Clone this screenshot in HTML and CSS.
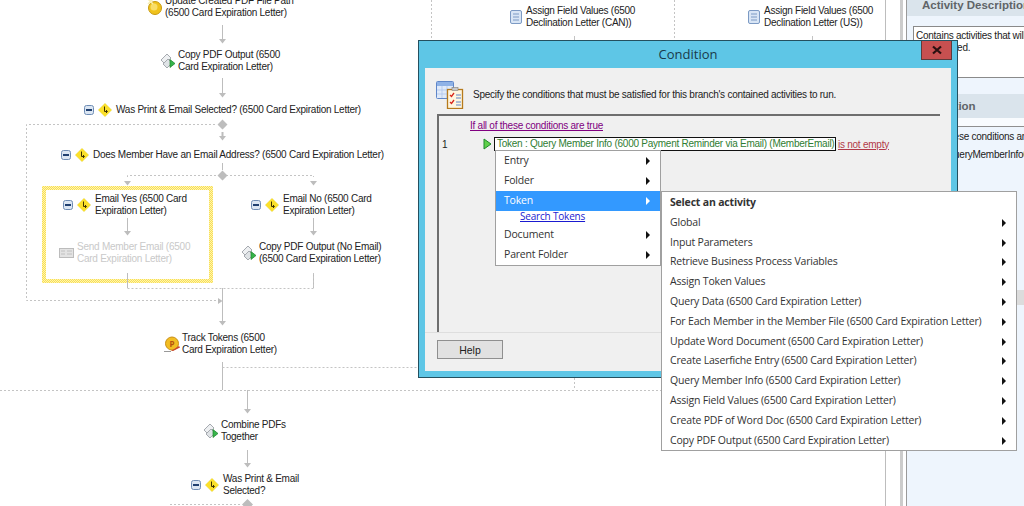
FILE: index.html
```html
<!DOCTYPE html>
<html lang="en">
<head>
<meta charset="utf-8">
<title>Condition</title>
<link rel="stylesheet" href="styles.css">
</head>
<body>
<svg class="defs" width="0" height="0" aria-hidden="true">
  <defs>
    <symbol id="i-collapse" viewBox="0 0 10 10">
      <rect x=".5" y=".5" width="9" height="9" rx="2" fill="#dbe6f3" stroke="#6f8db5"/>
      <rect x="2" y="4" width="6" height="2" fill="#1f3f70"/>
    </symbol>
    <symbol id="i-branch" viewBox="0 0 14 14">
      <path d="M7 0 14 7 7 14 0 7Z" fill="#fbe02c" stroke="#efeab8" stroke-width=".6"/>
      <path d="M6.500 3.500V8.500H9M8 7l1.500 1.500L8 10" fill="none" stroke="#3f3300" stroke-width="1"/>
    </symbol>
    <symbol id="i-coin" viewBox="0 0 18 18">
      <circle cx="9" cy="10" r="6.500" fill="#f0c21c" stroke="#c79a10"/>
      <circle cx="8" cy="9" r="3.500" fill="#f9de68"/>
      <path d="M2 1 7 6M7 1 2 6" stroke="#f7eeb0" stroke-width="1.500"/>
    </symbol>
    <symbol id="i-copy" viewBox="0 0 18 18">
      <path d="M2 8 8 2l4 4-6 6Z" fill="#eef0f2" stroke="#a6aab0"/>
      <path d="M4 12 9 7l4 4-5 5Z" fill="#dfe3e6" stroke="#a6aab0"/>
      <path d="M11 7.500 16 11.500 11 15.500Z" fill="#36b54a" stroke="#1c7f2c" stroke-width=".7"/>
    </symbol>
    <symbol id="i-doc" viewBox="0 0 18 18">
      <rect x="3.500" y="2.500" width="11" height="13" rx="1.500" fill="#d8e5f5" stroke="#7c9ac4"/>
      <path d="M6 6h6M6 9h6M6 12h6" stroke="#7c9ac4"/>
    </symbol>
    <symbol id="i-mail" viewBox="0 0 18 18">
      <rect x="1.500" y="4.500" width="14" height="9" fill="#e3e3e3" stroke="#bcbcbc"/>
      <path d="M3 7h4M3 10h4M9 7h5M9 10h5" stroke="#c0c0c0"/>
    </symbol>
    <symbol id="i-token" viewBox="0 0 18 18">
      <circle cx="9" cy="8.500" r="6.500" fill="#f2bd22" stroke="#c98f14"/>
      <text x="9" y="11.500" class="coin-letter">P</text>
      <path d="M8 16 16 11l1 1.500L10 16Z" fill="#c8452c"/>
      <path d="M1 16.500h7" stroke="#999"/>
    </symbol>
    <symbol id="i-check" viewBox="0 0 28 28">
      <rect x=".5" y=".5" width="17" height="17" rx="1" fill="#dfeafa" stroke="#5f86c9"/>
      <rect x="1" y="1" width="16" height="4" fill="#8fb2e6"/>
      <path d="M1 9h16M1 13h16M6 5v12M11 5v12" stroke="#a9c2ea" stroke-width=".7"/>
      <rect x="11.500" y="8.500" width="15" height="19" fill="#fff6df" stroke="#b67a1c" stroke-width="1.300"/>
      <rect x="16" y="6.500" width="6" height="3" fill="#c9c9c9" stroke="#808080" stroke-width=".6"/>
      <path d="M14 14l1.500 1.500L18 12M14 21l1.500 1.500L18 19" fill="none" stroke="#d8261c" stroke-width="1.300"/>
      <path d="M20 14h5M20 17h5M20 21h5M20 24h5" stroke="#5f86c9"/>
    </symbol>
  </defs>
</svg>

<div class="app">
  <main class="canvas">
    <div class="selection"></div>

    <svg class="wires" width="906" height="506" viewBox="0 0 906 506" aria-hidden="true">
      <g class="solid">
        <path d="M222.500 25V39M222.500 78V93M222.500 163V170M127.500 218V231M313.500 218V231M127.500 273V288M313.500 273V288M222.500 288V321M222.500 362V390M247.500 390V409M247.500 450V463M885.500 0V506"/>
      </g>
      <g class="dash">
        <path d="M215 124.500H26.500V300.500H218"/>
        <path d="M127.500 177V175.500H313.500V177M127.500 288.500H313.500V273"/>
        <path d="M222.500 367.500H418M0 390.500H906M170 504.500H240"/>
        <path d="M431.500 0V40M674.500 0V40M574.500 378V390"/>
      </g>
      <g class="solid-light">
        <path d="M574.500 36V40M812.500 36V40"/>
      </g>
      <g class="heads">
        <path d="M219 136h7l-3.500 4.500ZM219 39h7l-3.500 4.500ZM219 93h7l-3.500 4.500ZM124 181h7l-3.500 4.500ZM310 181h7l-3.500 4.500ZM124 231h7l-3.500 4.500ZM310 231h7l-3.500 4.500ZM219 321h7l-3.500 4.500ZM244 409h7l-3.500 4.500ZM244 463h7l-3.500 4.500Z"/>
        <path d="M218 298v6l4.500-3Z"/>
        <path d="M222.500 119.500l5 5-5 5-5-5ZM222.500 170.500l5 5-5 5-5-5ZM247.500 499l5.500 5.500-5.500 5.500-5.500-5.500Z"/>
        <rect x="221.500" y="132" width="2" height="4"/>
        <rect class="bar" x="900" y="0" width="3" height="506"/>
      </g>
    </svg>

    <div class="node n-update"><svg class="ico"><use href="#i-coin"/></svg><span>Update Created PDF File Path<br>(6500 Card Expiration Letter)</span></div>
    <div class="node n-copy"><svg class="ico"><use href="#i-copy"/></svg><span>Copy PDF Output (6500<br>Card Expiration Letter)</span></div>
    <div class="node branch n-was"><svg class="col"><use href="#i-collapse"/></svg><svg class="dia"><use href="#i-branch"/></svg><span>Was Print &amp; Email Selected? (6500 Card Expiration Letter)</span></div>
    <div class="node branch n-does"><svg class="col"><use href="#i-collapse"/></svg><svg class="dia"><use href="#i-branch"/></svg><span>Does Member Have an Email Address? (6500 Card Expiration Letter)</span></div>
    <div class="node branch n-yes"><svg class="col"><use href="#i-collapse"/></svg><svg class="dia"><use href="#i-branch"/></svg><span>Email Yes (6500 Card<br>Expiration Letter)</span></div>
    <div class="node branch n-no"><svg class="col"><use href="#i-collapse"/></svg><svg class="dia"><use href="#i-branch"/></svg><span>Email No (6500 Card<br>Expiration Letter)</span></div>
    <div class="node disabled n-send"><svg class="ico"><use href="#i-mail"/></svg><span>Send Member Email (6500<br>Card Expiration Letter)</span></div>
    <div class="node n-copyno"><svg class="ico"><use href="#i-copy"/></svg><span>Copy PDF Output (No Email)<br>(6500 Card Expiration Letter)</span></div>
    <div class="node n-track"><svg class="ico"><use href="#i-token"/></svg><span>Track Tokens (6500<br>Card Expiration Letter)</span></div>
    <div class="node n-combine"><svg class="ico"><use href="#i-copy"/></svg><span>Combine PDFs<br>Together</span></div>
    <div class="node branch n-was2"><svg class="col"><use href="#i-collapse"/></svg><svg class="dia"><use href="#i-branch"/></svg><span>Was Print &amp; Email<br>Selected?</span></div>
    <div class="node n-can"><svg class="ico"><use href="#i-doc"/></svg><span>Assign Field Values (6500<br>Declination Letter (CAN))</span></div>
    <div class="node n-us"><svg class="ico"><use href="#i-doc"/></svg><span>Assign Field Values (6500<br>Declination Letter (US))</span></div>
  </main>

  <aside class="side">
    <h2 class="side-head first">Activity Description</h2>
    <div class="side-box desc">Contains activities that will<br>be executed.</div>
    <h2 class="side-head">Condition</h2>
    <div class="side-gap"></div>
    <div class="side-box cond">
      <p>If all of these conditions are true</p>
      <p>Token: QueryMemberInfo6000</p>
    </div>
    <div class="side-band"></div>
  </aside>

  <section class="dialog">
    <header class="dlg-title">
      <span>Condition</span>
      <button class="close" type="button"><svg width="12" height="10" viewBox="0 0 12 10"><path d="M2 1.500 10 8.500M10 1.500 2 8.500" stroke="#2a1010" stroke-width="2.200"/></svg></button>
    </header>
    <div class="dlg-body">
      <div class="intro">
        <svg class="intro-ico"><use href="#i-check"/></svg>
        <span>Specify the conditions that must be satisfied for this branch's contained activities to run.</span>
      </div>
      <div class="cond-list">
        <a class="all-link">If all of these conditions are true</a>
        <div class="cond-row">
          <span class="row-num">1</span>
          <svg class="play" width="9" height="12" viewBox="0 0 9 12"><path d="M1 1 8 6 1 11Z" fill="#5fd04a" stroke="#1f8a2a"/></svg>
          <span class="cond-token">Token : Query Member Info (6000 Payment Reminder via Email) (MemberEmail)</span>
          <a class="cond-op">is not empty</a>
        </div>
      </div>
      <footer class="dlg-foot"><button class="help" type="button">Help</button></footer>
    </div>
  </section>

  <nav class="menu menu-a">
    <div class="mi">Entry</div>
    <div class="mi">Folder</div>
    <div class="mi on">Token</div>
    <a class="search">Search Tokens</a>
    <div class="mi">Document</div>
    <div class="mi">Parent Folder</div>
  </nav>

  <nav class="menu menu-b">
    <div class="mi head">Select an activity</div>
    <div class="mi">Global</div>
    <div class="mi">Input Parameters</div>
    <div class="mi">Retrieve Business Process Variables</div>
    <div class="mi">Assign Token Values</div>
    <div class="mi">Query Data (6500 Card Expiration Letter)</div>
    <div class="mi">For Each Member in the Member File (6500 Card Expiration Letter)</div>
    <div class="mi">Update Word Document (6500 Card Expiration Letter)</div>
    <div class="mi">Create Laserfiche Entry (6500 Card Expiration Letter)</div>
    <div class="mi">Query Member Info (6500 Card Expiration Letter)</div>
    <div class="mi">Assign Field Values (6500 Card Expiration Letter)</div>
    <div class="mi">Create PDF of Word Doc (6500 Card Expiration Letter)</div>
    <div class="mi">Copy PDF Output (6500 Card Expiration Letter)</div>
  </nav>
</div>
</body>
</html>
```
FILE: styles.css
```css
* { box-sizing: border-box; }
html, body { margin: 0; height: 100%; }
body { background: #fff; color: #222; font-family: "Liberation Sans", Arial, sans-serif; font-size: 10px; letter-spacing: -0.25px; overflow: hidden; }
.defs { position: absolute; }
.coin-letter { font: bold 8px "Open Sans", sans-serif; text-anchor: middle; fill: #b5500f; }

.app { position: relative; display: flex; width: 1024px; height: 506px; overflow: hidden; }

/* workflow canvas */
.canvas { position: relative; flex: 0 0 906px; height: 506px; background: #fff; }
.wires { position: absolute; left: 0; top: 0; overflow: visible; }
.wires path { fill: none; }
.solid path { stroke: #bdbdbd; }
.dash path { stroke: #c4c4c4; stroke-dasharray: 2 2; }
.solid-light path { stroke: #c4c4c4; }
.wires .heads path, .heads rect { fill: #bdbdbd; }
.wires .heads .bar { fill: #cccccc; }
.selection { position: absolute; left: 42px; top: 186px; width: 171px; height: 97px; padding: 4px; background: repeating-conic-gradient(#f8df55 0 25%, #fff4b0 0 50%) 0 0 / 2px 2px; }
.selection::before { content: ""; display: block; height: 100%; background: #fff; }

.node { position: absolute; display: flex; align-items: center; gap: 1px; white-space: nowrap; line-height: 12px; color: #222; }
.ico { width: 18px; height: 18px; flex: none; }
.branch { gap: 4px; }
.col { width: 10px; height: 10px; flex: none; }
.dia { width: 14px; height: 14px; flex: none; }
.disabled { color: #c9c9c9; }

.n-update { left: 146px; top: -5px; }
.n-copy { left: 159px; top: 49px; }
.n-was { left: 84px; top: 103px; }
.n-does { left: 61px; top: 148px; }
.n-yes { left: 63px; top: 193px; }
.n-no { left: 251px; top: 193px; }
.n-send { left: 58px; top: 241px; }
.n-copyno { left: 240px; top: 241px; }
.n-track { left: 163px; top: 332px; }
.n-combine { left: 202px; top: 419px; }
.n-was2 { left: 191px; top: 473px; }
.n-can { left: 507px; top: 5px; }
.n-us { left: 745px; top: 5px; }

/* right panel */
.side { flex: 1; min-width: 0; height: 506px; background: #eef5fd; border-left: 1px solid #9a9a9a; display: flex; flex-direction: column; overflow: hidden; }
.side-head { flex: none; margin: 0; height: 24px; background: #dae4ec; color: #5f6468; font-size: 11.500px; letter-spacing: 0; font-weight: 700; line-height: 24px; padding-left: 15px; white-space: nowrap; }
.side-head.first { height: 16px; line-height: 10px; }
.side-gap { flex: 0 0 9px; background: #f8fbfe; border-bottom: 1px solid #8f8f8f; height: 10px; }
.side-box { flex: none; margin-left: 6px; width: 130px; color: #222; line-height: 12px; white-space: nowrap; }
.desc { margin-top: 10px; height: 52px; background: #fff; border: 1px solid #8a8a8a; padding: 3px 2px; margin-bottom: 16px; }
.cond { height: 163px; padding: 4px 0 0 3px; }
.cond p { margin: 0 0 6px; }
.side-band { flex: 0 0 15px; background: #dcdcdc; }

/* dialog window */
.dialog { position: absolute; left: 418px; top: 40px; width: 540px; height: 338px; background: #5ec6e6; border: 1px solid #24505f; display: flex; flex-direction: column; }
.dlg-title { position: relative; flex: 0 0 27px; display: flex; align-items: center; justify-content: center; padding-bottom: 2px; font-family: "Open Sans", sans-serif; font-size: 13px; letter-spacing: 0; color: #1a3a4a; }
.close { position: absolute; right: 5px; top: 0; width: 31px; height: 19px; background: #c75050; border: 1px solid #5e3b3b; border-top: 0; padding: 0; display: flex; align-items: center; justify-content: center; }
.dlg-body { flex: 1; margin: 0 6px 6px; background: #f0f0f0; display: flex; flex-direction: column; }
.intro { flex: 0 0 46px; display: flex; align-items: center; gap: 9px; padding: 6px 0 0 11px; }
.intro-ico { width: 28px; height: 28px; flex: none; margin-top: 2px; }
.cond-list { flex: 0 0 218px; margin: 0 11px 0 12px; border-left: 2px solid #6e6e6e; border-top: 2px solid #6e6e6e; position: relative; }
.all-link { display: block; margin: 4px 0 0 31px; color: #800080; text-decoration: underline; line-height: 12px; }
.cond-row { display: flex; align-items: center; margin-top: 5px; height: 14px; }
.row-num { width: 44px; padding-left: 3px; }
.play { flex: none; margin-right: 2px; }
.cond-token { height: 14px; border: 1px solid #111; background: #fff; color: #2f7d32; line-height: 12px; padding: 0 2px; white-space: nowrap; width: 342px; }
.cond-op { margin-left: 2px; color: #b23a48; text-decoration: underline; }
.dlg-foot { flex: 1; border-top: 1px solid #dedede; padding: 7px 0 0 12px; }
.help { width: 66px; height: 19px; background: #e1e1e1; border: 1px solid #8f8f8f; padding: 0; font: 10.500px "Liberation Sans", sans-serif; color: #222; }

/* popup menus */
.menu { position: absolute; background: #fff; border: 1px solid #a0a0a0; color: #333; font-family: "Open Sans", sans-serif; font-size: 10.500px; letter-spacing: -0.19px; }
.menu-a { left: 495px; top: 150px; width: 166px; height: 116px; }
.menu-b { left: 661px; top: 191px; width: 356px; height: 260px; padding-top: 1px; }
.mi { position: relative; height: 20px; line-height: 19px; padding-left: 8px; white-space: nowrap; }
.menu-b .mi { height: 19.800px; line-height: 19.800px; }
.mi::after { content: ""; position: absolute; right: 10px; top: 6px; border-left: 4px solid #111; border-top: 4px solid transparent; border-bottom: 4px solid transparent; }
.mi.head { font-weight: 700; }
.mi.head::after { display: none; }
.mi.on { background: #3399ff; color: #fff; }
.mi.on::after { border-left-color: #fff; }
.search { display: block; height: 14px; line-height: 11px; padding-left: 24px; color: #1a1ad0; text-decoration: underline; font-size: 10px; }
```
